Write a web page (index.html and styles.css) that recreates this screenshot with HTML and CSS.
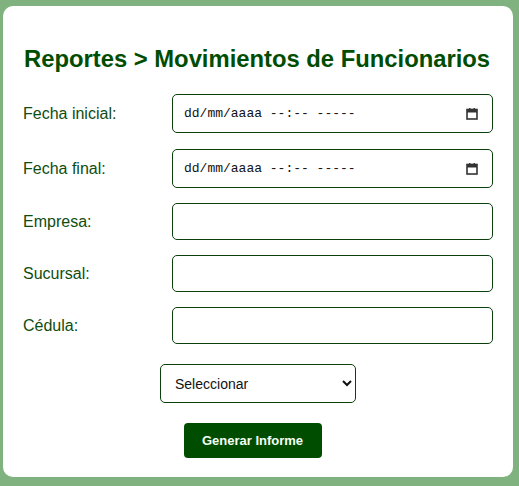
FILE: index.html
```html
<!DOCTYPE html>
<html lang="es">
<head>
<meta charset="utf-8">
<title>Reportes</title>
<link rel="stylesheet" href="styles.css">
</head>
<body>
<main class="card">
  <h2 class="title">Reportes &gt; Movimientos de Funcionarios</h2>
  <form class="form">
    <div class="row">
      <label class="label" for="fi">Fecha inicial:</label>
      <div class="field date" id="fi">
        <span class="date-text">dd/mm/aaaa --:-- -----</span>
        <svg class="cal" width="12" height="12" viewBox="0 0 12 12" aria-hidden="true">
          <rect x="1" y="1.5" width="10" height="9.5" fill="none" stroke="#333" stroke-width="1.6"/>
          <rect x="1" y="1.5" width="10" height="3" fill="#333"/>
          <rect x="3" y="0" width="1.5" height="2" fill="#333"/>
          <rect x="7.5" y="0" width="1.5" height="2" fill="#333"/>
        </svg>
      </div>
    </div>
    <div class="row">
      <label class="label" for="ff">Fecha final:</label>
      <div class="field date" id="ff">
        <span class="date-text">dd/mm/aaaa --:-- -----</span>
        <svg class="cal" width="12" height="12" viewBox="0 0 12 12" aria-hidden="true">
          <rect x="1" y="1.5" width="10" height="9.5" fill="none" stroke="#333" stroke-width="1.6"/>
          <rect x="1" y="1.5" width="10" height="3" fill="#333"/>
          <rect x="3" y="0" width="1.5" height="2" fill="#333"/>
          <rect x="7.5" y="0" width="1.5" height="2" fill="#333"/>
        </svg>
      </div>
    </div>
    <div class="row">
      <label class="label" for="emp">Empresa:</label>
      <input class="field text" id="emp" type="text">
    </div>
    <div class="row">
      <label class="label" for="suc">Sucursal:</label>
      <input class="field text" id="suc" type="text">
    </div>
    <div class="row">
      <label class="label" for="ced">Cédula:</label>
      <input class="field text" id="ced" type="text">
    </div>
    <div class="center select-wrap">
      <select class="select">
        <option>Seleccionar</option>
      </select>
    </div>
    <div class="center">
      <button class="btn" type="button">Generar Informe</button>
    </div>
  </form>
</main>
</body>
</html>
```
FILE: styles.css
```css
html, body {
  margin: 0;
  padding: 0;
}
body {
  background: #80b280;
  font-family: "Liberation Sans", Arial, sans-serif;
  height: 486px;
  overflow: hidden;
}
.card {
  box-sizing: border-box;
  background: #ffffff;
  margin: 6px 6px 0 3px;
  width: 510px;
  height: 471px;
  border-radius: 10px;
  padding: 39px 20px 0 20px;
}
.title {
  margin: 0 0 21px 1px;
  font-size: 23.8px;
  font-weight: bold;
  color: #004d00;
  line-height: 28px;
  white-space: nowrap;
}
.form {
  display: flex;
  flex-direction: column;
}
.row {
  display: grid;
  grid-template-columns: 149px 321px;
  align-items: center;
  margin-bottom: 15px;
}
.row:first-child {
  margin-bottom: 16px;
}
.label {
  font-size: 16px;
  color: #0f4d0f;
}
.field {
  box-sizing: border-box;
  width: 321px;
  border: 1px solid #0b400b;
  border-radius: 5px;
  background: #fff;
  margin: 0;
}
.date {
  height: 39px;
  display: flex;
  align-items: center;
  justify-content: space-between;
  padding: 0 14px 0 11px;
}
.date-text {
  font-family: "Liberation Mono", "Courier New", monospace;
  font-size: 13px;
  color: #111;
}
.text {
  height: 37px;
  font-size: 14px;
  padding: 0 10px;
  outline: none;
}
.center {
  display: flex;
  justify-content: center;
}
.select-wrap {
  margin-top: 5px;
  margin-bottom: 20px;
}
.select {
  box-sizing: border-box;
  width: 196px;
  height: 39px;
  border: 1px solid #0b400b;
  border-radius: 5px;
  background: #fff;
  font-family: "Liberation Sans", Arial, sans-serif;
  font-size: 14px;
  color: #111;
  padding: 0 8px 0 10px;
}
.btn {
  width: 138px;
  height: 35px;
  border: none;
  border-radius: 4px;
  background: #004d00;
  color: #f4fff4;
  font-family: "Liberation Sans", Arial, sans-serif;
  font-weight: bold;
  font-size: 13px;
  padding: 0;
  margin-right: 11px;
}
```
